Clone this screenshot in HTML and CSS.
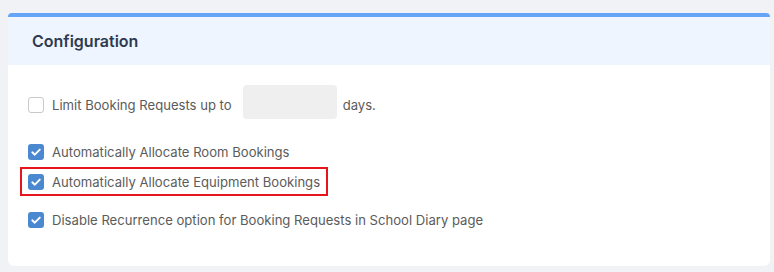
FILE: index.html
```html
<!doctype html>
<html lang="en">
<head>
  <meta charset="utf-8">
  <meta name="viewport" content="width=device-width,initial-scale=1">
  <title>Configuration</title>
  <link rel="stylesheet" href="styles.css">
</head>
<body>
  <div class="card">
    <div class="card-head">Configuration</div>
    <div class="card-body">
      <div class="row limit">
        <label class="opt"><span class="box"></span>Limit Booking Requests up to</label>
        <input class="days" type="text">
        <span class="unit">days.</span>
      </div>
      <label class="opt first"><span class="box on"></span>Automatically Allocate Room Bookings</label>
      <label class="opt mark"><span class="box on"></span>Automatically Allocate Equipment Bookings</label>
      <label class="opt last"><span class="box on"></span>Disable Recurrence option for Booking Requests in School Diary page</label>
    </div>
  </div>
</body>
</html>
```

FILE: styles.css
```css
body{margin:0;padding:13px 4px 7px 8px;background:#f0f2f6;font-family:Inter,"Noto Sans",Arial,sans-serif}
.card{background:#fff;border-top:4px solid #63a4f8;border-radius:4px 4px 6px 6px;overflow:hidden}
.card-head{height:48px;display:flex;align-items:center;padding-left:24px;background:#eef5ff;font-size:16px;font-weight:600;color:#2e3a4f}
.card-body{padding:20px 12px 32px;display:flex;flex-direction:column;align-items:flex-start}
.row{display:flex;align-items:center;height:34px;margin-bottom:18px}
.limit .opt,.limit .unit{margin-top:6px}
.opt{display:inline-flex;align-items:center;height:29px;padding:0 6px;border:2px solid transparent;font-size:13.1px;color:#5b5b5b;box-sizing:border-box}
.opt.mark{border-color:#e8141b;margin-top:1px}
.opt.last{margin-top:9px}
.box{width:16px;height:16px;box-sizing:border-box;border:1px solid #c9c9c9;border-radius:3px;background:#fff;margin-right:8px;flex:none}
.box.on{border:none;background:#4a89cf url("data:image/svg+xml,%3Csvg xmlns='http://www.w3.org/2000/svg' viewBox='0 0 16 16'%3E%3Cpath d='M4.3 8.3l2.5 2.4L11.8 5.6' fill='none' stroke='%23fff' stroke-width='1.9' stroke-linecap='round' stroke-linejoin='round'/%3E%3C/svg%3E") no-repeat center/16px 16px}
.days{width:94px;height:34px;box-sizing:border-box;border:none;border-radius:4px;background:#efefef;margin-left:3px}
.unit{font-size:13.1px;color:#5b5b5b;margin-left:6px}
```
